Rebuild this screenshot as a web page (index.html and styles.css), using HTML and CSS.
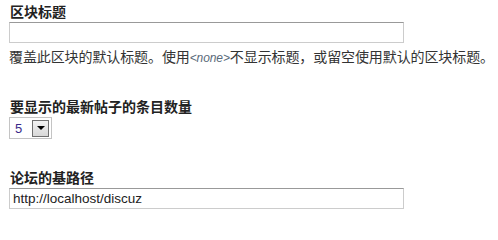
FILE: index.html
```html
<!DOCTYPE html>
<html lang="zh-CN">
<head>
<meta charset="utf-8">
<link rel="stylesheet" href="styles.css">
</head>
<body>
<form class="settings">
  <div class="form-item item-title">
    <label class="field-label" for="title">区块标题</label>
    <input class="text-field" id="title" type="text" value="">
    <div class="description">覆盖此区块的默认标题。使用<em class="code">&lt;none&gt;</em>不显示标题，或留空使用默认的区块标题。</div>
  </div>
  <div class="form-item item-count">
    <label class="field-label" for="count">要显示的最新帖子的条目数量</label>
    <div class="select-box" id="count">
      <span class="select-value">5</span>
      <span class="select-button"><span class="arrow"></span></span>
    </div>
  </div>
  <div class="form-item item-path">
    <label class="field-label" for="path">论坛的基路径</label>
    <input class="text-field" id="path" type="text" value="http://localhost/discuz">
  </div>
</form>
</body>
</html>
```
FILE: styles.css
```css
html, body {
  margin: 0;
  padding: 0;
  background: #ffffff;
}
body {
  font-family: "Noto Sans CJK SC", "Liberation Sans", sans-serif;
  font-size: 14px;
  color: #333333;
}
.settings {
  padding: 2px 0 0 9px;
}
.form-item {
  display: flex;
  flex-direction: column;
  align-items: flex-start;
}
.field-label {
  display: block;
  font-weight: bold;
  color: #222222;
  line-height: 18px;
  padding-left: 1px;
  margin-bottom: 2px;
}
.text-field {
  box-sizing: border-box;
  width: 395px;
  height: 21px;
  margin: 0;
  padding: 0 3px;
  border: 1px solid #cccccc;
  border-top-color: #999999;
  font-family: "Liberation Sans", Arial, sans-serif;
  font-size: 13.5px;
  color: #222222;
  outline: none;
}
.description {
  margin-top: 2px;
  line-height: 22px;
  white-space: nowrap;
  color: #333333;
  letter-spacing: -0.1px;
}
.code {
  font-family: "Liberation Sans", Arial, sans-serif;
  font-size: 12px;
  color: #5a6a7a;
}
.item-count {
  margin-top: 28px;
}
.select-box {
  box-sizing: border-box;
  width: 43px;
  height: 22px;
  border: 1px solid #c4c4c4;
  display: flex;
  align-items: center;
  justify-content: space-between;
  padding: 0 2px 0 5px;
}
.select-value {
  font-family: "Liberation Sans", Arial, sans-serif;
  font-size: 13px;
  color: #3a2a8a;
}
.select-button {
  box-sizing: border-box;
  width: 17px;
  height: 17px;
  border: 1px solid #707070;
  background: linear-gradient(#f2f2f2, #d8d8d8);
  display: flex;
  align-items: center;
  justify-content: center;
}
.arrow {
  width: 0;
  height: 0;
  border-left: 4px solid transparent;
  border-right: 4px solid transparent;
  border-top: 4px solid #000000;
}
.item-path {
  margin-top: 29px;
}
```
